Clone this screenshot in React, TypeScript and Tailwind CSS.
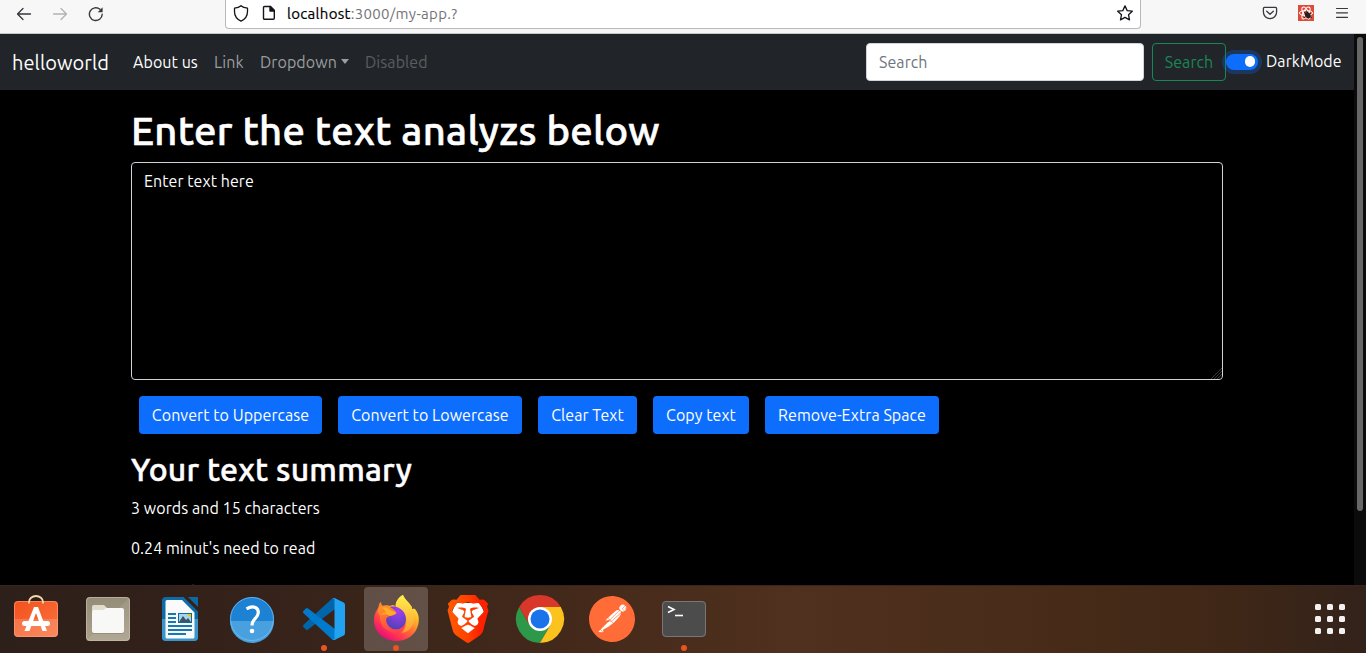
import React from "react";
import { SiBrave, SiPostman } from "react-icons/si";

function BrowserBar() {
  return (
    <header className="flex h-[34px] shrink-0 border-b border-[#c3cac6] bg-[#f7f7f8] text-[#2b2a33]">
      <div className="flex w-[225px] shrink-0 items-start gap-5 pl-4 pt-[6px]">
        <svg width="16" height="16" viewBox="0 0 16 16" fill="none" stroke="#38383d" strokeWidth="1.3" strokeLinecap="round" strokeLinejoin="round">
          <path d="M14.5 8H1.5M7 2.5 1.5 8 7 13.5" />
        </svg>
        <svg width="16" height="16" viewBox="0 0 16 16" fill="none" stroke="#b3b3b6" strokeWidth="1.3" strokeLinecap="round" strokeLinejoin="round">
          <path d="M1.5 8h13M9 2.5 14.5 8 9 13.5" />
        </svg>
        <svg width="16" height="16" viewBox="0 0 16 16" fill="none" stroke="#38383d" strokeWidth="1.4" strokeLinecap="round">
          <path d="M14.2 8.3A6.4 6.4 0 1 1 12 3.3" />
          <path d="M14.6 1.3v4.9H9.7z" fill="#38383d" stroke="none" />
        </svg>
      </div>
      <div className="flex h-[29px] w-[916px] shrink-0 items-start rounded-b border border-t-0 border-[#b9b9bb] bg-white pl-[7px] pt-[5px]">
        <svg width="16" height="17" viewBox="0 0 16 17" fill="none" stroke="#15141a" strokeWidth="1.3" strokeLinejoin="round">
          <path d="M8 .8C9.500 2.200 11.800 3 14.500 3.200V6.500C14.500 11 12 14.300 8 16.200C4 14.300 1.500 11 1.500 6.500V3.200C4.200 3 6.500 2.200 8 .8Z" />
        </svg>
        <svg className="ml-3" width="16" height="16" viewBox="0 0 16 16" fill="none" stroke="#15141a" strokeWidth="1.4" strokeLinejoin="round">
          <path d="M3.500 1.500H9.500L13.300 5.300V13.300A1 1 0 0 1 12.300 14.300H3.500A1 1 0 0 1 2.500 13.300V2.500A1 1 0 0 1 3.500 1.500Z" />
          <path d="M9 1.500V6H13.300z" fill="#15141a" />
        </svg>
        <span className="ml-[10px] whitespace-nowrap text-[15px] leading-[17px] tracking-[0.3px] text-[#737378]">
          <span className="text-black [-webkit-text-stroke:0.2px_black]">localhost</span>:3000/my-app.?
        </span>
        <svg className="ml-auto mr-[7px]" width="16" height="16" viewBox="0 0 16 16" fill="none" stroke="#15141a" strokeWidth="1.3" strokeLinejoin="round">
          <path d="m8 .9 2.200 4.700 5.100.6-3.800 3.500 1 5.200L8 12.400l-4.500 2.500 1-5.200L.7 6.200l5.100-.6z" />
        </svg>
      </div>
      <div className="flex flex-1 items-start justify-end gap-5 pr-4 pt-[5px]">
        <svg width="16" height="16" viewBox="0 0 16 16" fill="none" stroke="#38383d" strokeWidth="1.3" strokeLinecap="round" strokeLinejoin="round">
          <path d="M2.500 2.300H13.500A1.200 1.200 0 0 1 14.600 3.500V7A6.600 6.600 0 0 1 1.400 7V3.500A1.200 1.200 0 0 1 2.500 2.300Z" />
          <path d="M4.700 6.300 8 9.300l3.300-3" />
        </svg>
        <svg width="16" height="16" viewBox="0 0 16 16" fill="none">
          <rect width="16" height="16" fill="#dd4b39" />
          <g stroke="#fff" strokeWidth="1">
            <ellipse cx="8" cy="8" rx="6.600" ry="2.600" />
            <ellipse cx="8" cy="8" rx="6.600" ry="2.600" transform="rotate(60 8 8)" />
            <ellipse cx="8" cy="8" rx="6.600" ry="2.600" transform="rotate(120 8 8)" />
          </g>
          <ellipse cx="9.800" cy="10.300" rx="2.600" ry="3.300" transform="rotate(-35 9.800 10.300)" fill="#231f20" />
          <path d="M6 7l8 6M13 8l-7 5M8.500 5.500 9.500 8" stroke="#231f20" strokeWidth=".9" />
        </svg>
        <svg width="16" height="16" viewBox="0 0 16 16" stroke="#38383d" strokeWidth="1.200" strokeLinecap="round">
          <path d="M2.500 3.500h11M2.500 7.800h11M2.500 12.300h11" />
        </svg>
      </div>
    </header>
  );
}

function NavBar() {
  return (
    <nav className="flex h-14 items-center bg-[#212529] px-3 text-base tracking-[0.07px] text-white">
      <a className="w-[113px] whitespace-nowrap pt-px text-xl leading-[30px]">helloworld</a>
      <a className="ml-2 w-[81px] whitespace-nowrap">About us</a>
      <a className="w-[46px] text-[#9b9d9e]">Link</a>
      <a className="flex w-[105px] items-center text-[#9b9d9e]">
        <span className="w-[77px] whitespace-nowrap">Dropdown</span>
        <span className="mb-[2px] ml-1 border-x-[4.500px] border-t-[5px] border-x-transparent border-t-[#9b9d9e]" />
      </a>
      <a className="text-[#5a5d60]">Disabled</a>
      <div className="ml-auto flex items-center">
        <input
          placeholder="Search"
          className="h-[38px] w-[278px] rounded border border-[#ced4da] bg-white px-3 pb-px text-base text-[#212529] outline-none placeholder:text-[#6c757d]"
        />
        <button className="ml-2 h-[38px] w-[74px] rounded border border-[#198754] text-base text-[#198754]">Search</button>
        <span className="mb-[1px] flex h-4 w-8 shrink-0 items-center justify-end rounded-full bg-[#0d6efd] pr-[3px] shadow-[0_0_0_4px_rgba(13,110,253,0.25)]">
          <span className="h-[10.500px] w-[10.500px] rounded-full bg-white" />
        </span>
        <span className="mb-[2px] ml-2 w-[76px] whitespace-nowrap">DarkMode</span>
      </div>
    </nav>
  );
}

function ActionButton({ label, size }: { label: string; size: string }) {
  return <button className={`h-[38px] whitespace-nowrap rounded bg-[#0d6efd] text-base text-white ${size}`}>{label}</button>;
}

function Analyzer() {
  return (
    <main className="ml-[131px] w-[1092px] text-base tracking-[0.06px] text-white">
      <h1 className="mt-[17px] whitespace-nowrap text-[40px] font-medium leading-[48px] tracking-[0.28px] [-webkit-text-stroke:0.6px_white]">
        Enter the text analyzs below
      </h1>
      <div className="relative mt-[7px] h-[218px] rounded border border-[#ced4da] bg-black px-3 py-[6px]">
        Enter text here
        <svg className="absolute bottom-0 right-0" width="11" height="11" viewBox="0 0 11 11" stroke="#484848" strokeWidth=".8">
          <path d="M0 11 11 0M3 11l8-8M6 11l5-5M9 11l2-2" />
        </svg>
      </div>
      <div className="ml-2 mt-4 flex gap-4">
        <ActionButton label="Convert to Uppercase" size="w-[183px]" />
        <ActionButton label="Convert to Lowercase" size="w-[184px]" />
        <ActionButton label="Clear Text" size="w-[99px]" />
        <ActionButton label="Copy text" size="w-[96px]" />
        <ActionButton label="Remove-Extra Space" size="w-[174px]" />
      </div>
      <h2 className="mt-4 whitespace-nowrap text-[32px] font-medium leading-[38px] tracking-[0.2px] [-webkit-text-stroke:0.5px_white]">
        Your text summary
      </h2>
      <p className="mt-2">3 words and 15 characters</p>
      <p className="mt-4">0.24 minut's need to read</p>
      <h3 className="mt-[19px] text-[28px] font-medium leading-[34px] tracking-[0.1px] [-webkit-text-stroke:0.4px_white]">Preview</h3>
    </main>
  );
}

function Slot({ active, running, children }: { active?: boolean; running?: boolean; children: React.ReactNode }) {
  return (
    <div className={active ? "relative h-16 w-16 rounded bg-white/20" : "relative h-16 w-16"}>
      {children}
      {running && <span className="absolute bottom-0 left-[29px] h-[6px] w-[6px] rounded-full bg-[#e95420]" />}
    </div>
  );
}

function SoftwareIcon() {
  return (
    <svg width="64" height="64" viewBox="0 0 64 64" fill="none">
      <defs>
        <linearGradient id="bag" x1="0" y1="0" x2="1" y2="1">
          <stop stopColor="#f4511e" />
          <stop offset="1" stopColor="#f9733f" />
        </linearGradient>
      </defs>
      <rect x="10" y="14" width="44" height="36" rx="4" fill="url(#bag)" />
      <path d="M10 32h44v14a4 4 0 0 1-4 4H14a4 4 0 0 1-4-4z" fill="#fff" opacity=".16" />
      <rect x="10.500" y="14.500" width="43" height="35" rx="3.500" stroke="#ffa27c" strokeOpacity=".6" />
      <path d="M25 16.500V15a7 6 0 0 1 14 0v1.500" stroke="#f3d9a8" strokeWidth="1.800" />
      <path d="M30 20h4l9 24h-4.500L32 26l-6.500 18H20.500z" fill="#fff" />
      <rect x="18" y="34" width="28" height="5" rx="2.500" fill="#fff" />
    </svg>
  );
}

function FilesIcon() {
  return (
    <svg width="64" height="64" viewBox="0 0 64 64" fill="none">
      <defs>
        <linearGradient id="files" x1="0" y1="0" x2="0" y2="1">
          <stop stopColor="#958c78" />
          <stop offset="1" stopColor="#aaa18c" />
        </linearGradient>
      </defs>
      <rect x="10" y="10" width="44" height="44" rx="4" fill="url(#files)" />
      <path d="M10 54 54 10v40a4 4 0 0 1-4 4z" fill="#fff" opacity=".08" />
      <rect x="10.500" y="10.500" width="43" height="43" rx="3.500" stroke="#c4bcab" strokeOpacity=".7" />
      <path d="M16 24v-4a2 2 0 0 1 2-2h10l3 3-3 4z" fill="#e2dccd" />
      <path d="M16 25.500a2 2 0 0 1 2-2h9l3.500-2.500H46a2 2 0 0 1 2 2v22a2 2 0 0 1-2 2H18a2 2 0 0 1-2-2z" fill="#8a816e" opacity=".6" />
      <path d="M16 25a2 2 0 0 1 2-2h9l3-2h16a2 2 0 0 1 2 2v21a2 2 0 0 1-2 2H18a2 2 0 0 1-2-2z" fill="#f8f8f7" />
    </svg>
  );
}

function WriterIcon() {
  return (
    <svg width="64" height="64" viewBox="0 0 64 64">
      <path d="M18 10h17.500L50 24.500V50a4 4 0 0 1-4 4H18a4 4 0 0 1-4-4V14a4 4 0 0 1 4-4z" fill="#0d6ca6" />
      <path d="M14 32h36v18a4 4 0 0 1-4 4H18a4 4 0 0 1-4-4z" fill="#3996cc" />
      <path d="M40 10h9a1 1 0 0 1 1 1v9z" fill="#0c6aa3" />
      <path d="M17.500 14.500a1.500 1.500 0 0 1 1.500-1.500h15l12.500 12.500V50a1.500 1.500 0 0 1-1.500 1.500H19a1.500 1.500 0 0 1-1.500-1.500z" fill="#fafafa" />
      <path d="M20 27h8M20 31h8M20 35h8M20 39h24M20 43h24M20 47h18" stroke="#1679b5" strokeWidth="2" />
      <rect x="30" y="26" width="14" height="10" fill="#0c6aa3" />
      <rect x="31" y="27" width="12" height="8" fill="#a3d5f4" />
      <path d="m31 35 4-6 3 4 2-2 3 4z" fill="#41515e" />
      <path d="M39 27h4v4z" fill="#f6c500" />
    </svg>
  );
}

function HelpIcon() {
  return (
    <svg width="64" height="64" viewBox="0 0 64 64" fill="none">
      <circle cx="32" cy="32" r="22" fill="#1e82d4" />
      <path d="M10 34a22 22 0 0 0 44 0z" fill="#48a0df" />
      <circle cx="32" cy="32" r="21.500" stroke="#80c1ef" strokeOpacity=".7" />
      <path d="M26.500 21.800C34 17.800 38.500 21 38.300 25.800C38 31.500 32 31.500 32 38.500" stroke="#fff" strokeWidth="3.200" />
      <circle cx="32" cy="44" r="2.300" fill="#fff" />
    </svg>
  );
}

function CodeIcon() {
  return (
    <svg width="64" height="64" viewBox="0 0 64 64">
      <g transform="translate(11 11) scale(.42)">
        <path fill="#0065A9" d="M96.461 10.796 75.857.876a6.230 6.230 0 0 0-7.107 1.207L1.299 63.583a4.167 4.167 0 0 0 .004 6.162l5.510 5.009a4.167 4.167 0 0 0 5.321.236L93.361 13.370C96.086 11.303 100 13.246 100 16.667v-.24a6.250 6.250 0 0 0-3.539-5.631Z" />
        <path fill="#007ACC" d="m96.461 89.204-20.604 9.920a6.230 6.230 0 0 1-7.107-1.207L1.299 36.417a4.167 4.167 0 0 1 .004-6.162l5.510-5.009a4.167 4.167 0 0 1 5.321-.236L93.361 86.630C96.086 88.697 100 86.754 100 83.333v.24a6.250 6.250 0 0 1-3.539 5.631Z" />
        <path fill="#22a3f2" d="M75.858 99.126a6.230 6.230 0 0 1-7.108-1.209C71.056 100.223 75 98.590 75 95.328V4.672C75 1.410 71.056-.223 68.750 2.083a6.230 6.230 0 0 1 7.108-1.209l20.601 9.907A6.250 6.250 0 0 1 100 16.413v67.174a6.250 6.250 0 0 1-3.541 5.633Z" />
      </g>
    </svg>
  );
}

function FirefoxIcon() {
  return (
    <svg width="64" height="64" viewBox="0 0 64 64">
      <defs>
        <linearGradient id="ffbody" x1=".85" y1=".1" x2=".25" y2=".95">
          <stop stopColor="#fff44f" />
          <stop offset=".3" stopColor="#ffb625" />
          <stop offset=".55" stopColor="#ff7035" />
          <stop offset=".82" stopColor="#ff2e56" />
          <stop offset="1" stopColor="#e3117a" />
        </linearGradient>
        <radialGradient id="ffglobe" cx=".6" cy=".2" r=".85">
          <stop stopColor="#a53df2" />
          <stop offset="1" stopColor="#4d42b4" />
        </radialGradient>
        <linearGradient id="fftail" x1="0" y1="0" x2="0" y2="1">
          <stop stopColor="#fff04a" />
          <stop offset="1" stopColor="#ff9a32" />
        </linearGradient>
        <linearGradient id="ffface" x1="0" y1="0" x2=".4" y2="1">
          <stop stopColor="#ff9a26" />
          <stop offset=".5" stopColor="#ff6a35" />
          <stop offset="1" stopColor="#ff4150" />
        </linearGradient>
      </defs>
      <path d="M10 34C10 27.500 12 24 14.500 20.500C14.500 18.500 15 16.500 17 14.800C17 17 18 18.500 19 19C21 18 24 18 26 19C29 17 31 18 32 21C31 15 35 10 39 8C40 12 45 15 48 20L48 22C50 21.500 50.500 21.500 51 22C54 26 55 29 54.800 33C54.500 45.500 44.500 54 32.500 54C20 54 10 45 10 34Z" fill="url(#ffbody)" />
      <path d="M31.500 19C31.500 14 36 9 39 8C40 12 48 17 50 27C52 36 46 45 38 46C44 38 44 30 38 24C35 21.500 32 21 31.500 19Z" fill="url(#fftail)" />
      <path d="M14.500 20.500C18 18 22 18.500 24 20C27 20 30 23 32.500 26L41 35C41.500 42 37 46.500 31 46C22 45 15 38 16 29C14 27 13.500 23.500 14.500 20.500Z" fill="url(#ffface)" />
      <path d="M26 20C34 18 42 24 42 32.500A10 9.800 0 0 1 22 32.500C22.500 30.500 24 29.500 26.500 29C28.500 28.500 31 28.500 32.500 26C31 23.500 29 21.500 26 20Z" fill="url(#ffglobe)" />
      <path d="M18 21C22 19.500 25 21.500 27 23.500C29.500 24 31.500 25 32.500 26C30 28 27.500 28 26 29C23 27 20 27 17 28C18 26 20 25.500 22 25.500C21 23.500 20 22 18 21Z" fill="#ffae26" />
    </svg>
  );
}

function BraveIcon() {
  return (
    <div className="relative grid h-16 w-16 place-items-center">
      <svg className="absolute inset-0" width="64" height="64" viewBox="0 0 64 64">
        <defs>
          <linearGradient id="brave" x1="0" x2="24" y1="0" y2="0" gradientUnits="userSpaceOnUse">
            <stop offset=".2" stopColor="#ff5500" />
            <stop offset=".5" stopColor="#ff4000" />
            <stop offset=".75" stopColor="#ff2000" />
          </linearGradient>
        </defs>
        <path d="M20 16h24l4 9-5 17-11 8-11-8-5-17z" fill="#fff" />
      </svg>
      <SiBrave size={48} className="relative fill-[url(#brave)]" />
    </div>
  );
}

function ChromeIcon() {
  return (
    <svg width="64" height="64" viewBox="0 0 64 64">
      <path d="M11.200 20A24 24 0 0 0 32 56L42.400 38 32 32 21.600 38z" fill="#2d974a" />
      <path d="M52.800 20A24 24 0 0 1 32 56L42.400 38 32 20z" fill="#fcc31e" />
      <path d="M11.200 20A24 24 0 0 1 52.800 20H32L21.600 38z" fill="#da372b" />
      <circle cx="32" cy="32" r="12" fill="#fff" />
      <circle cx="32" cy="32" r="9.500" fill="#1a73e8" />
    </svg>
  );
}

function PostmanIcon() {
  return (
    <div className="relative grid h-16 w-16 place-items-center">
      <span className="absolute left-3 top-3 h-10 w-10 rounded-full bg-white" />
      <SiPostman size={46} color="#ff6c37" className="relative" />
    </div>
  );
}

function TerminalIcon() {
  return (
    <svg width="64" height="64" viewBox="0 0 64 64" fill="none">
      <rect x="10" y="14" width="44" height="36" rx="4" fill="#4c4c4c" />
      <rect x="10.500" y="14.500" width="43" height="35" rx="3.500" stroke="#777" />
      <path d="m16 19.500 6 3-6 3" stroke="#fff" strokeWidth="1.600" />
      <path d="M23 28.500h8" stroke="#fff" strokeWidth="1.600" />
    </svg>
  );
}

function Dock() {
  return (
    <footer className="flex h-[68px] shrink-0 items-start gap-2 border-t border-[#35261f] bg-[linear-gradient(90deg,#2d1f1a_0%,#33211a_14%,#3b251a_30%,#472b1b_46%,#50301e_58%,#472b18_78%,#3f2717_90%,#33221a_100%)] pl-1 pt-px">
      <Slot><SoftwareIcon /></Slot>
      <Slot><FilesIcon /></Slot>
      <Slot><WriterIcon /></Slot>
      <Slot><HelpIcon /></Slot>
      <Slot running><CodeIcon /></Slot>
      <Slot active running><FirefoxIcon /></Slot>
      <Slot><BraveIcon /></Slot>
      <Slot><ChromeIcon /></Slot>
      <Slot><PostmanIcon /></Slot>
      <Slot running><TerminalIcon /></Slot>
      <div className="ml-auto mr-[21px] mt-[17px] grid grid-cols-3 gap-[6px]">
        {Array.from({ length: 9 }, (_, i) => (
          <span key={i} className="h-[6px] w-[6px] rounded-[1.500px] bg-[#f2f1ef]" />
        ))}
      </div>
    </footer>
  );
}

export default function App() {
  return (
    <div className="flex h-[653px] w-[1366px] flex-col overflow-hidden bg-black font-['Ubuntu','Noto_Sans',sans-serif]">
      <BrowserBar />
      <div className="flex h-[551px] shrink-0 overflow-hidden">
        <div className="w-[1354px] shrink-0">
          <NavBar />
          <Analyzer />
        </div>
        <div className="w-3 bg-[#0b0b0b] pl-[3px] pt-[3px]">
          <div className="h-[474px] w-[6px] rounded-full bg-[#676767]" />
        </div>
      </div>
      <Dock />
    </div>
  );
}
